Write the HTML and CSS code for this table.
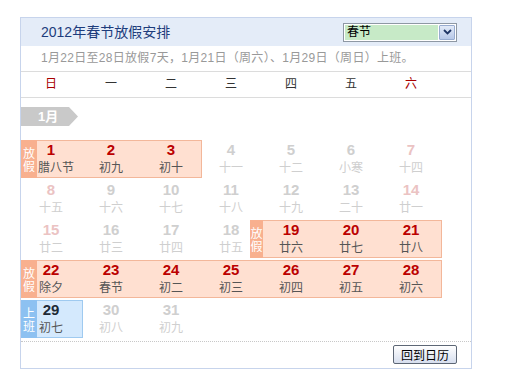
FILE: index.html
```html
<!DOCTYPE html>
<html lang="zh-CN">
<head>
<meta charset="utf-8">
<title>2012年春节放假安排</title>
<link rel="stylesheet" href="styles.css">
</head>
<body>
<div class="cal">
  <div class="hd">
    <span class="title">2012年春节放假安排</span>
    <div class="sel">
      <span class="sel-val">春节</span>
      <span class="sel-btn"><svg width="9" height="6" viewBox="0 0 9 6"><path d="M1 1 L4.5 4.5 L8 1" fill="none" stroke="#1f3565" stroke-width="1.8"/></svg></span>
    </div>
  </div>
  <div class="note">1月22日至28日放假7天，1月21日（周六）、1月29日（周日）上班。</div>
  <div class="week">
    <span class="wd red">日</span><span class="wd">一</span><span class="wd">二</span><span class="wd">三</span><span class="wd">四</span><span class="wd">五</span><span class="wd red">六</span>
  </div>
  <div class="body">
    <div class="month">1月</div>
    <div class="weeks">
      <div class="wk">
        <span class="band b-1-3"><span class="lbl">放假</span></span>
        <div class="d hol"><b>1</b><i class="shift">腊八节</i></div>
        <div class="d hol"><b>2</b><i>初九</i></div>
        <div class="d hol"><b>3</b><i>初十</i></div>
        <div class="d off"><b>4</b><i>十一</i></div>
        <div class="d off"><b>5</b><i>十二</i></div>
        <div class="d off"><b>6</b><i>小寒</i></div>
        <div class="d off we"><b>7</b><i>十四</i></div>
      </div>
      <div class="wk">
        <div class="d off we"><b>8</b><i>十五</i></div>
        <div class="d off"><b>9</b><i>十六</i></div>
        <div class="d off"><b>10</b><i>十七</i></div>
        <div class="d off"><b>11</b><i>十八</i></div>
        <div class="d off"><b>12</b><i>十九</i></div>
        <div class="d off"><b>13</b><i>二十</i></div>
        <div class="d off we"><b>14</b><i>廿一</i></div>
      </div>
      <div class="wk">
        <span class="band b-5-7"><span class="lbl lbl-narrow">放假</span></span>
        <div class="d off we"><b>15</b><i>廿二</i></div>
        <div class="d off"><b>16</b><i>廿三</i></div>
        <div class="d off"><b>17</b><i>廿四</i></div>
        <div class="d off"><b>18</b><i>廿五</i></div>
        <div class="d hol"><b>19</b><i>廿六</i></div>
        <div class="d hol"><b>20</b><i>廿七</i></div>
        <div class="d hol"><b>21</b><i>廿八</i></div>
      </div>
      <div class="wk">
        <span class="band b-1-7"><span class="lbl">放假</span></span>
        <div class="d hol"><b>22</b><i>除夕</i></div>
        <div class="d hol"><b>23</b><i>春节</i></div>
        <div class="d hol"><b>24</b><i>初二</i></div>
        <div class="d hol"><b>25</b><i>初三</i></div>
        <div class="d hol"><b>26</b><i>初四</i></div>
        <div class="d hol"><b>27</b><i>初五</i></div>
        <div class="d hol"><b>28</b><i>初六</i></div>
      </div>
      <div class="wk">
        <span class="band band-work b-1-1"><span class="lbl">上班</span></span>
        <div class="d work"><b>29</b><i>初七</i></div>
        <div class="d off"><b>30</b><i>初八</i></div>
        <div class="d off"><b>31</b><i>初九</i></div>
      </div>
    </div>
  </div>
  <div class="ft">
    <button class="back" type="button">回到日历</button>
  </div>
</div>
</body>
</html>
```
FILE: styles.css
```css
html, body {
  margin: 0;
  padding: 0;
  background: #fff;
}
body {
  font-family: "Liberation Sans", Arial, "Noto Sans CJK SC", sans-serif;
  font-size: 12px;
  color: #333;
}
.cal {
  width: 450px;
  margin: 17px 0 0 20px;
  border: 1px solid #c7d4ec;
}
.hd {
  height: 28px;
  background: #e4ecf8;
  display: flex;
  align-items: center;
  justify-content: space-between;
  padding: 0 14px 0 20px;
}
.title {
  font-size: 14px;
  color: #1d3c7c;
  line-height: 18px;
}
.sel {
  width: 114px;
  height: 19px;
  box-sizing: border-box;
  border: 1px solid #8e98a4;
  background: #fff;
  display: flex;
  padding: 1px;
  gap: 1px;
}
.sel-val {
  flex: 1;
  background: #c7eac7;
  color: #000;
  font-size: 12px;
  line-height: 15px;
  padding-left: 2px;
}
.sel-btn {
  width: 16px;
  box-sizing: border-box;
  border: 1px solid #98acd0;
  border-radius: 1px;
  background: linear-gradient(#e2eaf8, #b7c8e8);
  display: flex;
  align-items: center;
  justify-content: center;
}
.note {
  height: 25px;
  line-height: 25px;
  padding-left: 20px;
  color: #999;
  border-bottom: 1px solid #dcdcdc;
  white-space: nowrap;
  letter-spacing: 0.3px;
}
.week {
  height: 25px;
  display: grid;
  grid-template-columns: repeat(7, 60px);
  border-bottom: 1px solid #dcdcdc;
}
.wd {
  text-align: center;
  line-height: 25px;
  color: #333;
}
.wd.red {
  color: #a80000;
}
.body {
  padding-top: 9px;
}
.month {
  width: 57px;
  height: 19px;
  background: #c9c9c9;
  clip-path: polygon(0 0, 48px 0, 57px 50%, 48px 100%, 0 100%);
  color: #fff;
  font-weight: bold;
  font-size: 13px;
  line-height: 19px;
  padding-left: 17px;
  box-sizing: border-box;
}
.weeks {
  margin-top: 14px;
  display: flex;
  flex-direction: column;
  gap: 2px;
}
.wk {
  display: grid;
  grid-template-columns: repeat(7, 60px);
  grid-template-rows: 38px;
}
.wk > div:nth-of-type(1) { grid-column: 1; }
.wk > div:nth-of-type(2) { grid-column: 2; }
.wk > div:nth-of-type(3) { grid-column: 3; }
.wk > div:nth-of-type(4) { grid-column: 4; }
.wk > div:nth-of-type(5) { grid-column: 5; }
.wk > div:nth-of-type(6) { grid-column: 6; }
.wk > div:nth-of-type(7) { grid-column: 7; }
.wk > * {
  grid-row: 1;
}
.band {
  display: flex;
  box-sizing: border-box;
  border: 1px solid #f3b79a;
  background: #ffe0d1;
}
.band-work {
  border-color: #9fcaf0;
  background: #d4e9fd;
}
.b-1-3 { grid-column: 1 / span 3; margin-right: -1px; }
.b-5-7 { grid-column: 5 / span 3; margin-left: -11px; margin-right: -1px; }
.b-1-7 { grid-column: 1 / span 7; margin-right: -1px; }
.b-1-1 { grid-column: 1 / span 1; margin-right: -2px; }
.lbl {
  width: 16px;
  margin: -1px 0 -1px -1px;
  background: #f8b08f;
  color: #fff;
  font-size: 12px;
  line-height: 13px;
  display: flex;
  align-items: center;
  justify-content: center;
  text-align: center;
  font-family: "Noto Sans CJK SC", sans-serif;
}
.lbl-narrow {
  width: 13px;
  overflow: hidden;
}
.band-work .lbl {
  background: #8dc1f1;
}
.d {
  text-align: center;
  padding-top: 2px;
}
.d b {
  display: block;
  font-family: "Liberation Sans", Arial, sans-serif;
  font-size: 15px;
  font-weight: bold;
  line-height: 16px;
}
.d i {
  display: block;
  font-style: normal;
  font-size: 12px;
  line-height: 18px;
  font-family: "Noto Sans CJK SC", sans-serif;
}
.d i.shift {
  padding-left: 10px;
  white-space: nowrap;
}
.d.hol b { color: #bb0000; }
.d.hol i { color: #555; }
.d.work b { color: #1e2a36; }
.d.work i { color: #555; }
.d.off b { color: #cfcfcf; }
.d.off i { color: #cfcfcf; }
.d.off.we b { color: #ebc3c3; }
.ft {
  margin-top: 3px;
  border-top: 1px dotted #c8c8c8;
  padding: 3px 14px 4px 0;
  display: flex;
  justify-content: flex-end;
}
.back {
  width: 64px;
  height: 19px;
  padding: 0;
  border: 1px solid #5c6675;
  border-radius: 2px;
  background: linear-gradient(#ffffff, #d6deee);
  color: #000;
  font-family: "Noto Sans CJK SC", sans-serif;
  font-size: 12px;
  line-height: 17px;
}
```
